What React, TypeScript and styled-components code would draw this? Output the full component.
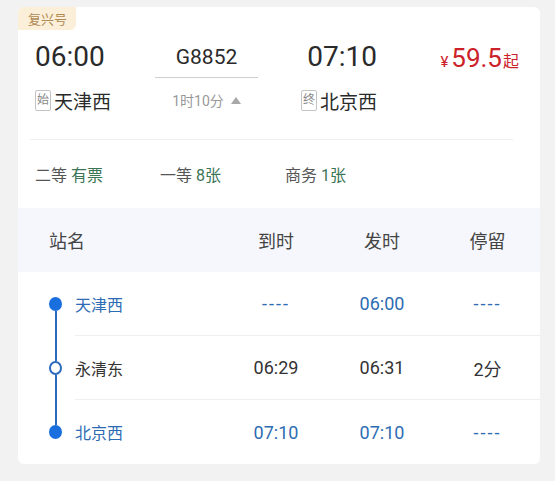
import React from 'react';
import styled, { createGlobalStyle } from 'styled-components';

const GlobalStyle = createGlobalStyle`
  body {
    margin: 0;
    background: #f2f2f2;
    font-family: Roboto, "Noto Sans CJK SC", sans-serif;
    color: #333;
  }
`;

const Page = styled.div`
  padding: 7px 15px 17px 18px;
`;

const Card = styled.section`
  width: 522px;
  background: #fff;
  border-radius: 6px;
  overflow: hidden;
`;

const Badge = styled.div`
  display: inline-flex;
  align-items: center;
  height: 23px;
  padding: 0 9px 0 10px;
  background: #fcefd9;
  color: #ae8a55;
  font-size: 13px;
  border-bottom-right-radius: 6px;
`;

const Top = styled.div`
  display: flex;
  padding: 11px 21px 27px 17px;
`;

const Divider = styled.div`
  height: 1px;
  margin: 0 27px 0 12px;
  background: #eeeeee;
`;

const Block = styled.div<{ $w: number; $align: string }>`
  width: ${(p) => p.$w}px;
  display: flex;
  flex-direction: column;
  align-items: ${(p) => p.$align};
`;

const Time = styled.div`
  font-size: 28px;
  line-height: 32px;
  color: #2a2a2a;
  height: 32px;
  margin-bottom: 15px;
`;

const TrainNo = styled.div`
  align-self: stretch;
  text-align: center;
  font-size: 21px;
  line-height: 32px;
  color: #2a2a2a;
  padding-bottom: 4px;
  border-bottom: 1px solid #cfcfcf;
  margin-bottom: 10px;
`;

const Duration = styled.div`
  display: flex;
  align-items: center;
  height: 24px;
  font-size: 14px;
  color: #999;
`;

const Caret = styled.span`
  width: 0;
  height: 0;
  margin-left: 7px;
  border-left: 5px solid transparent;
  border-right: 5px solid transparent;
  border-bottom: 7px solid #a8a8a8;
`;

const StationLine = styled.div`
  display: flex;
  align-items: center;
  height: 24px;
  gap: 3px;
`;

const Tag = styled.span`
  width: 14px;
  height: 19px;
  border: 1px solid #c4c4c4;
  border-radius: 2px;
  font-size: 12px;
  line-height: 19px;
  text-align: center;
  color: #888;
`;

const StationName = styled.span`
  font-size: 19px;
  color: #2a2a2a;
`;

const Price = styled.div`
  flex: 1;
  display: flex;
  justify-content: flex-end;
  align-items: baseline;
  height: 32px;
  color: #cc2129;
  line-height: 34px;
`;

const Yen = styled.span`
  font-size: 15px;
`;

const Amount = styled.span`
  font-size: 26px;
  margin-left: 3px;
`;

const Qi = styled.span`
  font-size: 16px;
  margin-left: 1px;
`;

const Seats = styled.div`
  display: flex;
  padding: 25px 17px 21px;
`;

const Seat = styled.div`
  width: 125px;
  font-size: 16px;
  line-height: 22px;
  color: #555;
`;

const SeatValue = styled.span`
  color: #3b7556;
  margin-left: 4px;
`;

const Grid = styled.div`
  display: grid;
  grid-template-columns: 205px 106px 106px 1fr;
  align-items: center;
`;

const Head = styled(Grid)`
  height: 64px;
  background: #f5f7fc;
  font-size: 18px;
  color: #444;
`;

const HeadCell = styled.div<{ $first?: boolean }>`
  text-align: ${(p) => (p.$first ? 'left' : 'center')};
  padding-left: ${(p) => (p.$first ? '31px' : '0')};
`;

const Row = styled.div`
  display: flex;
  height: 64px;
`;

const Rail = styled.div`
  width: 57px;
  padding-left: 31px;
  box-sizing: border-box;
  display: flex;
  flex-direction: column;
`;

const Track = styled.div`
  width: 13px;
  display: flex;
  flex-direction: column;
  align-items: center;
  height: 100%;
`;

const Segment = styled.div<{ $on: boolean }>`
  flex: 1;
  width: 2px;
  background: ${(p) => (p.$on ? '#2a6bbf' : 'transparent')};
`;

const Dot = styled.div<{ $hollow: boolean }>`
  width: 13px;
  height: 14px;
  box-sizing: border-box;
  border-radius: 50%;
  background: ${(p) => (p.$hollow ? '#fff' : '#1a6fdf')};
  border: 2px solid ${(p) => (p.$hollow ? '#2a6bbf' : '#1a6fdf')};
`;

const RowBody = styled.div<{ $last: boolean }>`
  flex: 1;
  display: grid;
  grid-template-columns: 148px 106px 106px 1fr;
  align-items: center;
  border-bottom: ${(p) => (p.$last ? 'none' : '1px solid #efefef')};
`;

const Cell = styled.div<{ $blue: boolean; $first?: boolean; $dash?: boolean }>`
  font-size: ${(p) => (p.$first ? '16px' : '18px')};
  text-align: ${(p) => (p.$first ? 'left' : 'center')};
  color: ${(p) => (p.$blue ? '#2d6cb3' : '#333')};
  letter-spacing: ${(p) => (p.$dash ? '2px' : 'normal')};
`;

const stops = [
  { name: '天津西', arrive: '----', depart: '06:00', stay: '----', end: true },
  { name: '永清东', arrive: '06:29', depart: '06:31', stay: '2分', end: false },
  { name: '北京西', arrive: '07:10', depart: '07:10', stay: '----', end: true },
];

const seats = [
  { label: '二等', value: '有票' },
  { label: '一等', value: '8张' },
  { label: '商务', value: '1张' },
];

export default function App() {
  return (
    <Page>
      <GlobalStyle />
      <Card>
        <Badge>复兴号</Badge>
        <Top>
          <Block $w={120} $align="flex-start">
            <Time>06:00</Time>
            <StationLine>
              <Tag>始</Tag>
              <StationName>天津西</StationName>
            </StationLine>
          </Block>
          <Block $w={103} $align="center">
            <TrainNo>G8852</TrainNo>
            <Duration>
              1时10分
              <Caret />
            </Duration>
          </Block>
          <Block $w={119} $align="flex-end">
            <Time>07:10</Time>
            <StationLine>
              <Tag>终</Tag>
              <StationName>北京西</StationName>
            </StationLine>
          </Block>
          <Price>
            <Yen>¥</Yen>
            <Amount>59.5</Amount>
            <Qi>起</Qi>
          </Price>
        </Top>
        <Divider />
        <Seats>
          {seats.map((s) => (
            <Seat key={s.label}>
              {s.label}
              <SeatValue>{s.value}</SeatValue>
            </Seat>
          ))}
        </Seats>
        <Head>
          <HeadCell $first>站名</HeadCell>
          <HeadCell>到时</HeadCell>
          <HeadCell>发时</HeadCell>
          <HeadCell>停留</HeadCell>
        </Head>
        {stops.map((s, i) => (
          <Row key={s.name}>
            <Rail>
              <Track>
                <Segment $on={i > 0} />
                <Dot $hollow={!s.end} />
                <Segment $on={i < stops.length - 1} />
              </Track>
            </Rail>
            <RowBody $last={i === stops.length - 1}>
              <Cell $first $blue={s.end}>{s.name}</Cell>
              <Cell $blue={s.end} $dash={s.arrive === '----'}>{s.arrive}</Cell>
              <Cell $blue={s.end} $dash={s.depart === '----'}>{s.depart}</Cell>
              <Cell $blue={s.end} $dash={s.stay === '----'}>{s.stay}</Cell>
            </RowBody>
          </Row>
        ))}
      </Card>
    </Page>
  );
}
